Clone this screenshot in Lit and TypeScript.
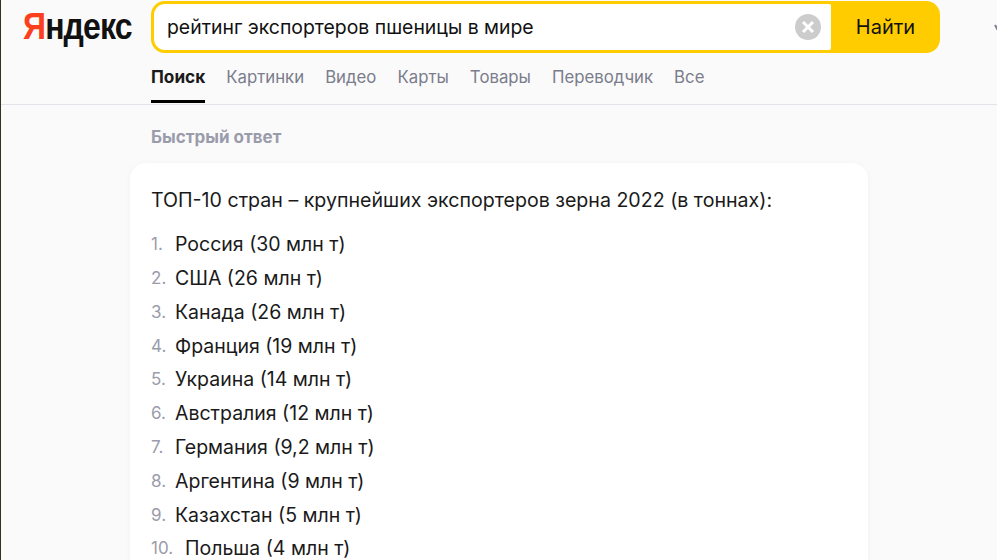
import { LitElement, html, css } from 'lit';
import { customElement } from 'lit/decorators.js';

const TABS = ['Поиск', 'Картинки', 'Видео', 'Карты', 'Товары', 'Переводчик', 'Все'];
const COUNTRIES = [
  'Россия (30 млн т)',
  'США (26 млн т)',
  'Канада (26 млн т)',
  'Франция (19 млн т)',
  'Украина (14 млн т)',
  'Австралия (12 млн т)',
  'Германия (9,2 млн т)',
  'Аргентина (9 млн т)',
  'Казахстан (5 млн т)',
  'Польша (4 млн т)',
];

@customElement('app-root')
export class AppRoot extends LitElement {
  static styles = css`
    :host {
      display: block;
      height: 560px;
      overflow: hidden;
      background: #fafafa;
      border-left: 1px solid #2f3320;
      font-family: Inter, 'Noto Sans', sans-serif;
      color: #1a1a1a;
    }
    .header {
      height: 104px;
      border-bottom: 1px solid #e2e3e8;
      display: flex;
      padding-left: 22px;
    }
    .logo {
      width: 128px;
      flex: none;
      padding-top: 6px;
      font-family: 'Liberation Sans', sans-serif;
      font-size: 36px;
      font-weight: 700;
      letter-spacing: -1px;
      line-height: 42px;
      color: #111;
      transform: scaleX(0.89);
      transform-origin: left top;
      box-sizing: border-box;
    }
    .logo span {
      color: #fc3f1d;
    }
    .main {
      width: 789px;
      flex: none;
    }
    .search {
      margin-top: 1px;
      height: 52px;
      display: flex;
      border-radius: 14px;
      background: #ffcc00;
      overflow: hidden;
    }
    .field {
      flex: 0 0 677px;
      margin: 3px 0 3px 3px;
      border-radius: 11px 2px 2px 11px;
      background: #fff;
      display: flex;
      align-items: center;
      padding: 0 10px 0 13px;
      box-sizing: border-box;
      font-size: 19.4px;
      color: #111;
    }
    .query {
      flex: 1;
    }
    .clear {
      display: block;
      width: 26px;
      height: 26px;
    }
    .go {
      flex: 1;
      display: flex;
      align-items: center;
      justify-content: center;
      font-size: 20px;
      color: #111;
    }
    .tabs {
      display: flex;
      gap: 21px;
      margin-top: 1px;
      height: 50px;
    }
    .tab {
      font-size: 16.8px;
      line-height: 46px;
      color: #7a7d8c;
      box-sizing: border-box;
      height: 49px;
    }
    .tab.active {
      font-size: 17.2px;
      font-weight: 700;
      color: #1a1a1a;
      border-bottom: 3px solid #000;
    }
    .chevron {
      flex: none;
      margin: 24px 0 0 54px;
      width: 12px;
      height: 12px;
    }
    .section {
      margin: 0 0 0 129px;
      width: 738px;
    }
    .caption {
      margin: 21px 0 0 21px;
      font-size: 17px;
      line-height: 22px;
      font-weight: 700;
      color: #9a9cab;
    }
    .card {
      margin-top: 15px;
      background: #fff;
      border-radius: 16px;
      box-shadow: 0 1px 6px rgba(0, 0, 0, 0.04);
      padding: 22px 21px 20px;
      height: 500px;
      box-sizing: border-box;
    }
    .lead {
      font-size: 19.6px;
      line-height: 30px;
      margin-bottom: 12.3px;
    }
    .row {
      display: flex;
      height: 33.8px;
      align-items: center;
      font-size: 19.5px;
      color: #1a1a1a;
    }
    .num {
      flex: 0 0 24px;
      font-size: 17px;
      color: #9a9cab;
    }
    .num.wide {
      flex-basis: 34px;
    }
  `;

  render() {
    return html`
      <div class="header">
        <div class="logo"><span>Я</span>ндекс</div>
        <div class="main">
          <div class="search">
            <div class="field">
              <div class="query">рейтинг экспортеров пшеницы в мире</div>
              <svg class="clear" viewBox="0 0 26 26">
                <circle cx="13" cy="13" r="13" fill="#cccccc"></circle>
                <path d="M8 8l10 10M18 8L8 18" stroke="#fff" stroke-width="3"></path>
              </svg>
            </div>
            <div class="go">Найти</div>
          </div>
          <div class="tabs">
            ${TABS.map((t, i) => html`<div class="tab ${i === 0 ? 'active' : ''}">${t}</div>`)}
          </div>
        </div>
        <svg class="chevron" viewBox="0 0 12 12">
          <path d="M1 1l5 9 5-9" fill="none" stroke="#7a8095" stroke-width="2"></path>
        </svg>
      </div>
      <div class="section">
        <div class="caption">Быстрый ответ</div>
        <div class="card">
          <div class="lead">ТОП-10 стран – крупнейших экспортеров зерна 2022 (в тоннах):</div>
          ${COUNTRIES.map(
            (c, i) => html`<div class="row">
              <span class="num ${i === 9 ? 'wide' : ''}">${i + 1}.</span><span>${c}</span>
            </div>`
          )}
        </div>
      </div>
    `;
  }
}
